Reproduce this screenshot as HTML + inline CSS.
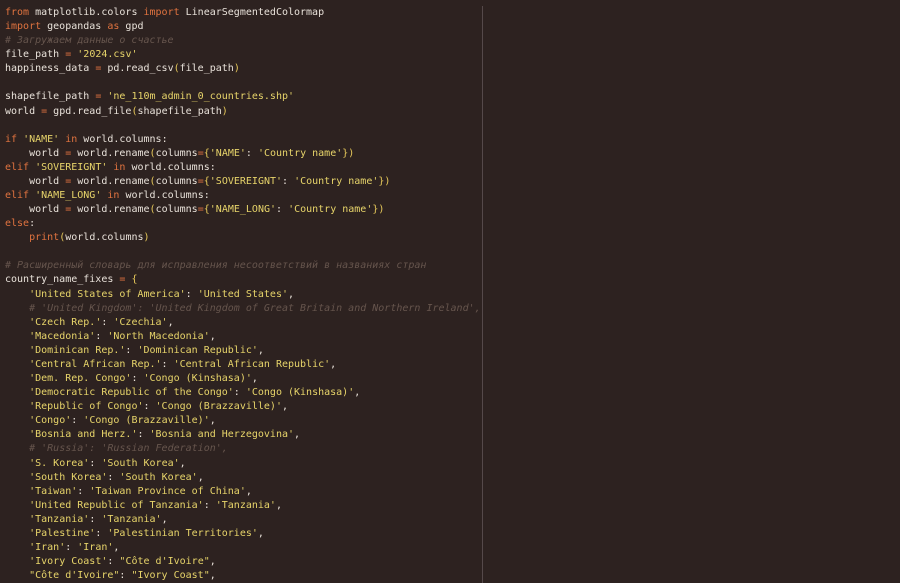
<!DOCTYPE html>
<html><head><meta charset="utf-8"><style>
html,body{margin:0;padding:0;background:#2d2220;width:900px;height:583px;overflow:hidden}
pre{margin:0;position:absolute;left:5px;top:6px;font-family:"DejaVu Sans Mono","Liberation Mono",monospace;font-size:10px;line-height:14.08px;color:#e9e2da;white-space:pre}
.k{color:#e0733f}.s{color:#e7d46a}.c{color:#66554d;font-style:italic}.p{color:#e7c95a}
.div{position:absolute;left:482px;top:6px;width:1px;height:577px;background:#55494a}
</style></head><body>
<div class="div"></div>
<pre><span class="k">from</span> matplotlib.colors <span class="k">import</span> LinearSegmentedColormap
<span class="k">import</span> geopandas <span class="k">as</span> gpd
<span class="c"># Загружаем данные о счастье</span>
file_path <span class="k">=</span> <span class="s">'2024.csv'</span>
happiness_data <span class="k">=</span> pd.read_csv<span class="p">(</span>file_path<span class="p">)</span>

shapefile_path <span class="k">=</span> <span class="s">'ne_110m_admin_0_countries.shp'</span>
world <span class="k">=</span> gpd.read_file<span class="p">(</span>shapefile_path<span class="p">)</span>

<span class="k">if</span> <span class="s">'NAME'</span> <span class="k">in</span> world.columns:
    world <span class="k">=</span> world.rename<span class="p">(</span>columns<span class="k">=</span><span class="p">{</span><span class="s">'NAME'</span>: <span class="s">'Country name'</span><span class="p">})</span>
<span class="k">elif</span> <span class="s">'SOVEREIGNT'</span> <span class="k">in</span> world.columns:
    world <span class="k">=</span> world.rename<span class="p">(</span>columns<span class="k">=</span><span class="p">{</span><span class="s">'SOVEREIGNT'</span>: <span class="s">'Country name'</span><span class="p">})</span>
<span class="k">elif</span> <span class="s">'NAME_LONG'</span> <span class="k">in</span> world.columns:
    world <span class="k">=</span> world.rename<span class="p">(</span>columns<span class="k">=</span><span class="p">{</span><span class="s">'NAME_LONG'</span>: <span class="s">'Country name'</span><span class="p">})</span>
<span class="k">else</span>:
    <span class="k">print</span><span class="p">(</span>world.columns<span class="p">)</span>

<span class="c"># Расширенный словарь для исправления несоответствий в названиях стран</span>
country_name_fixes <span class="k">=</span> <span class="p">{</span>
    <span class="s">'United States of America'</span>: <span class="s">'United States'</span>,
    <span class="c"># 'United Kingdom': 'United Kingdom of Great Britain and Northern Ireland',</span>
    <span class="s">'Czech Rep.'</span>: <span class="s">'Czechia'</span>,
    <span class="s">'Macedonia'</span>: <span class="s">'North Macedonia'</span>,
    <span class="s">'Dominican Rep.'</span>: <span class="s">'Dominican Republic'</span>,
    <span class="s">'Central African Rep.'</span>: <span class="s">'Central African Republic'</span>,
    <span class="s">'Dem. Rep. Congo'</span>: <span class="s">'Congo (Kinshasa)'</span>,
    <span class="s">'Democratic Republic of the Congo'</span>: <span class="s">'Congo (Kinshasa)'</span>,
    <span class="s">'Republic of Congo'</span>: <span class="s">'Congo (Brazzaville)'</span>,
    <span class="s">'Congo'</span>: <span class="s">'Congo (Brazzaville)'</span>,
    <span class="s">'Bosnia and Herz.'</span>: <span class="s">'Bosnia and Herzegovina'</span>,
    <span class="c"># 'Russia': 'Russian Federation',</span>
    <span class="s">'S. Korea'</span>: <span class="s">'South Korea'</span>,
    <span class="s">'South Korea'</span>: <span class="s">'South Korea'</span>,
    <span class="s">'Taiwan'</span>: <span class="s">'Taiwan Province of China'</span>,
    <span class="s">'United Republic of Tanzania'</span>: <span class="s">'Tanzania'</span>,
    <span class="s">'Tanzania'</span>: <span class="s">'Tanzania'</span>,
    <span class="s">'Palestine'</span>: <span class="s">'Palestinian Territories'</span>,
    <span class="s">'Iran'</span>: <span class="s">'Iran'</span>,
    <span class="s">'Ivory Coast'</span>: <span class="s">"Côte d'Ivoire"</span>,
    <span class="s">"Côte d'Ivoire"</span>: <span class="s">"Ivory Coast"</span>,</pre>
</body></html>
